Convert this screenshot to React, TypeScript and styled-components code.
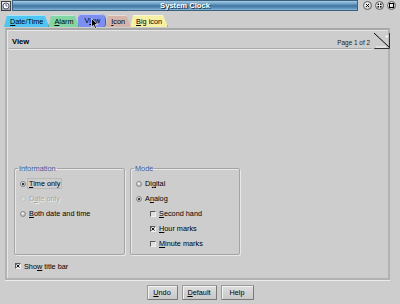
import React from "react";
import styled, { createGlobalStyle } from "styled-components";

const Global = createGlobalStyle`
  html, body { margin: 0; padding: 0; background: #cdcdcd; }
  body { font-family: "Liberation Sans", Arial, sans-serif; font-size: 7.3px; color: #000; }
`;

const Window = styled.div`
  width: 400px;
  height: 304px;
  display: flex;
  flex-direction: column;
  background: #cdcdcd;
  overflow: hidden;
  position: relative;
`;

const TitleBar = styled.div`
  height: 11px;
  flex: none;
  display: flex;
  align-items: center;
  gap: 1px;
  padding: 0 4px 0 1px;
`;

const AppIcon = styled.div`
  width: 10px;
  height: 10px;
  box-sizing: border-box;
  border: 1px solid #404040;
  background: linear-gradient(#f0f0f0, #9aa4b4);
  display: flex;
  align-items: center;
  justify-content: center;
`;

const TitleStrip = styled.div`
  flex: 1;
  height: 9px;
  background: linear-gradient(#a8cbe4 0%, #6fa2c8 30%, #3f75a0 55%, #5d93bc 80%, #8ab7d8 100%);
  border: 1px solid #3a6280;
  display: flex;
  align-items: center;
  justify-content: center;
  margin-right: 2px;
`;

const TitleText = styled.span`
  color: #fff;
  font-weight: bold;
  font-size: 7.6px;
  line-height: 9px;
  text-shadow: 1px 1px 0 #1e3c58;
`;

const WinButton = styled.div`
  width: 9px;
  height: 9px;
  border-radius: 50%;
  box-sizing: border-box;
  border: 1px solid #606060;
  background: radial-gradient(circle at 35% 35%, #ffffff, #b8b8b8);
  display: flex;
  align-items: center;
  justify-content: center;
  margin-left: 2px;
`;

const TabRow = styled.div`
  height: 14px;
  flex: none;
  display: flex;
  align-items: flex-end;
  padding-left: 4px;
  margin-top: 2px;
`;

const Tab = styled.div<{ $bg: string; $active?: boolean }>`
  height: ${(p) => (p.$active ? 13 : 12)}px;
  box-sizing: border-box;
  padding: 0 6px 0 6px;
  margin-right: -1px;
  background: ${(p) => p.$bg};
  border-radius: ${(p) => (p.$active ? "4px 5px 3px 3px" : "3px 5px 0 0")};
  clip-path: ${(p) =>
    p.$active
      ? "none"
      : "polygon(3px 0, calc(100% - 5px) 0, 100% 100%, 0 100%)"};
  box-shadow: inset 0 1px 0 rgba(255, 255, 255, 0.5), inset -1px 0 0 rgba(0, 0, 0, 0.35);
  display: flex;
  align-items: center;
  position: relative;
  z-index: ${(p) => (p.$active ? 2 : 1)};
`;

const Cursor = styled.div`
  position: absolute;
  left: 91px;
  top: 18px;
  width: 8px;
  height: 11px;
  z-index: 5;
`;

const U = styled.span`
  text-decoration: underline;
`;

const Panel = styled.div`
  height: 252px;
  flex: none;
  box-sizing: border-box;
  margin: 1px 10px 0 5px;
  border: 2px solid #b2b2b2;
  border-top-color: #a8a8a8;
  box-shadow: inset 1px 1px 0 #e6e6e6, 0 1px 0 #ececec;
  display: flex;
  flex-direction: column;
  padding: 2px 0 0 2px;
  position: relative;
`;

const Header = styled.div`
  display: flex;
  align-items: flex-end;
  height: 14px;
  flex: none;
  padding: 0 2px 2px 3px;
  border-bottom: 1px solid #a9a9a9;
  box-shadow: 0 1px 0 #ececec;
  margin-right: 16px;
`;

const HeaderTitle = styled.span`
  font-weight: bold;
  font-size: 7.6px;
  flex: 1;
`;

const PageLabel = styled.span`
  font-size: 6.4px;
  color: #222;
`;

const Corner = styled.div`
  position: absolute;
  right: -2px;
  top: 3px;
  width: 16px;
  height: 16px;
`;

const Spacer = styled.div`
  flex: 1;
`;

const Body = styled.div`
  display: flex;
  gap: 5px;
  padding: 0 0 0 5px;
  flex: none;
`;

const Group = styled.fieldset<{ $w: number }>`
  width: ${(p) => p.$w}px;
  height: 91px;
  box-sizing: border-box;
  margin: 0;
  padding: 3px 0 0 5px;
  border: 1px solid #a4a4a4;
  box-shadow: 1px 1px 0 #e8e8e8, inset 1px 1px 0 #e8e8e8;
  border-radius: 2px;
  display: flex;
  flex-direction: column;
`;

const Legend = styled.legend`
  color: #41579a;
  font-size: 7.3px;
  padding: 0 1px;
  margin-left: -2px;
  line-height: 9px;
`;

const Row = styled.div<{ $indent?: number; $disabled?: boolean }>`
  height: 15px;
  display: flex;
  align-items: center;
  gap: 2px;
  padding-left: ${(p) => p.$indent ?? 0}px;
  color: ${(p) => (p.$disabled ? "#a6a6a6" : "#000")};
  text-shadow: ${(p) => (p.$disabled ? "1px 1px 0 #eee" : "none")};
`;

const Radio = styled.span<{ $on?: boolean; $disabled?: boolean }>`
  width: 6px;
  height: 6px;
  border-radius: 50%;
  box-sizing: border-box;
  border: 1px solid ${(p) => (p.$disabled ? "#c0c0c0" : "#8a8a8a")};
  background: ${(p) =>
    p.$disabled
      ? "#d8d8d8"
      : "radial-gradient(circle at 40% 35%, #ffffff, #9a9a9a)"};
  display: flex;
  align-items: center;
  justify-content: center;
  &::after {
    content: "";
    display: ${(p) => (p.$on ? "block" : "none")};
    width: 2px;
    height: 2px;
    border-radius: 50%;
    background: #000;
  }
`;

const Check = styled.span`
  width: 6px;
  height: 6px;
  box-sizing: border-box;
  border: 1px solid #5a5a5a;
  border-right-color: #f0f0f0;
  border-bottom-color: #f0f0f0;
  background: #e0e0e0;
  display: flex;
  align-items: center;
  justify-content: center;
`;

const Label = styled.span<{ $focus?: boolean }>`
  outline: ${(p) => (p.$focus ? "1px solid #b8b8b8" : "none")};
  padding: 0 1px;
  line-height: 9px;
`;

const ShowRow = styled.div`
  display: flex;
  align-items: center;
  gap: 2px;
  height: 12px;
  flex: none;
  margin: 5px 0 6px 6px;
`;

const ButtonBar = styled.div`
  flex: 1;
  display: flex;
  align-items: center;
  justify-content: center;
  gap: 4px;
`;

const Button = styled.div<{ $w: number }>`
  width: ${(p) => p.$w}px;
  height: 15px;
  box-sizing: border-box;
  border: 1px solid #9a9a9a;
  border-right-color: #7a7a7a;
  border-bottom-color: #7a7a7a;
  border-radius: 1px;
  background: linear-gradient(#dedede, #c8c8c8);
  box-shadow: inset 1px 1px 0 #f2f2f2;
  display: flex;
  align-items: center;
  justify-content: center;
`;

const XMark = () => (
  <svg width="4" height="4" viewBox="0 0 4 4">
    <path d="M0.5 0.5l3 3M3.5 0.5l-3 3" stroke="#000" strokeWidth="0.9" />
  </svg>
);

export default function App() {
  return (
    <Window>
      <Global />
      <TitleBar>
        <AppIcon>
          <svg width="8" height="8" viewBox="0 0 8 8">
            <circle cx="4" cy="4" r="3" fill="#fff" stroke="#334" strokeWidth="0.8" />
            <path d="M4 2v2h1.5" stroke="#2244aa" strokeWidth="0.8" fill="none" />
          </svg>
        </AppIcon>
        <TitleStrip>
          <TitleText>System Clock</TitleText>
        </TitleStrip>
        <WinButton>
          <svg width="5" height="5" viewBox="0 0 5 5">
            <path d="M1 1l3 3M4 1l-3 3" stroke="#000" strokeWidth="1" />
          </svg>
        </WinButton>
        <WinButton>
          <svg width="5" height="5" viewBox="0 0 5 5">
            <rect x="0.5" y="0.5" width="1.5" height="1.5" fill="#000" />
            <rect x="3" y="0.5" width="1.5" height="1.5" fill="#000" />
            <rect x="0.5" y="3" width="1.5" height="1.5" fill="#000" />
            <rect x="3" y="3" width="1.5" height="1.5" fill="#000" />
          </svg>
        </WinButton>
        <WinButton>
          <svg width="5" height="5" viewBox="0 0 5 5">
            <rect x="0.5" y="0.5" width="4" height="4" fill="none" stroke="#000" strokeWidth="1" />
          </svg>
        </WinButton>
      </TitleBar>
      <TabRow>
        <Tab $bg="#4fc6f2"><U>D</U>ate/Time</Tab>
        <Tab $bg="#82d6a4"><U>A</U>larm</Tab>
        <Tab $bg="#7d8ef2" $active>V<U>i</U>ew</Tab>
        <Tab $bg="#d6b4aa"><U>I</U>con</Tab>
        <Tab $bg="#f6f0a4"><U>B</U>ig icon</Tab>
      </TabRow>
      <Cursor>
        <svg width="8" height="11" viewBox="0 0 8 11">
          <path d="M0.5 0.5V9L2.6 7.2L4.2 10.5L5.6 9.8L4.1 6.6H7Z" fill="#000" stroke="#fff" strokeWidth="0.7" />
        </svg>
      </Cursor>
      <Panel>
        <Header>
          <HeaderTitle>View</HeaderTitle>
          <PageLabel>Page 1 of 2</PageLabel>
        </Header>
        <Corner>
          <svg width="16" height="16" viewBox="0 0 16 16">
            <path d="M0 0L16 15" stroke="#000" strokeWidth="1" />
            <path d="M0.5 16V15.5H15.5V0" stroke="#333" strokeWidth="1" fill="none" />
            <path d="M12 3l1 1M13 2v3M11.5 3.5h3" stroke="#fff" strokeWidth="0.8" />
            <path d="M2 14h10" stroke="#fff" strokeWidth="0.8" />
          </svg>
        </Corner>
        <Spacer />
        <Body>
          <Group $w={111}>
            <Legend>Information</Legend>
            <Row><Radio $on /><Label $focus><U>T</U>ime only</Label></Row>
            <Row $disabled><Radio $disabled /><Label>D<U>a</U>te only</Label></Row>
            <Row><Radio /><Label><U>B</U>oth date and time</Label></Row>
          </Group>
          <Group $w={110}>
            <Legend>Mode</Legend>
            <Row><Radio /><Label>Di<U>g</U>ital</Label></Row>
            <Row><Radio $on /><Label>A<U>n</U>alog</Label></Row>
            <Row $indent={14}><Check /><Label><U>S</U>econd hand</Label></Row>
            <Row $indent={14}><Check><XMark /></Check><Label><U>H</U>our marks</Label></Row>
            <Row $indent={14}><Check /><Label><U>M</U>inute marks</Label></Row>
          </Group>
        </Body>
        <ShowRow>
          <Check><XMark /></Check>
          <Label>Sho<U>w</U> title bar</Label>
        </ShowRow>
      </Panel>
      <ButtonBar>
        <Button $w={31}><U>U</U>ndo</Button>
        <Button $w={35}><U>D</U>efault</Button>
        <Button $w={33}>Help</Button>
      </ButtonBar>
    </Window>
  );
}
